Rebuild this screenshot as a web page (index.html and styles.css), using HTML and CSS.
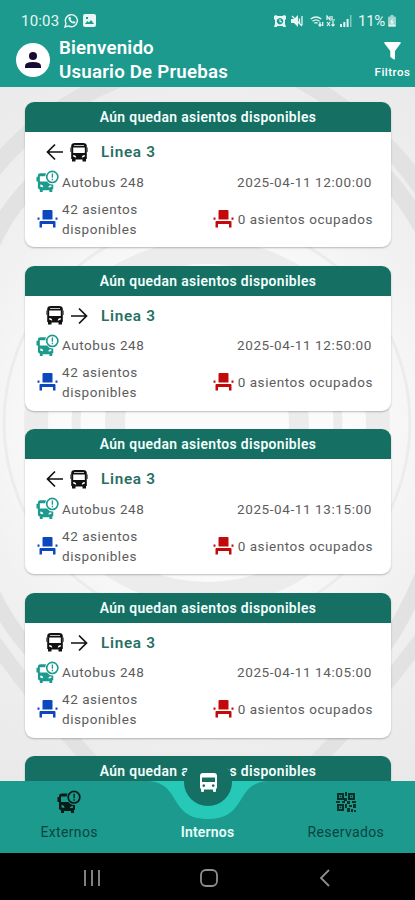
FILE: index.html
```html
<!DOCTYPE html>
<html lang="es">
<head>
<meta charset="utf-8">
<title>Autobuses</title>
<link rel="stylesheet" href="styles.css">
</head>
<body>
<svg class="defs" width="0" height="0">
  <symbol id="bus" viewBox="0 0 17 19"><path fill-rule="evenodd" d="M0 3q0-3 3-3h11q3 0 3 3v11q0 1.500-1 2v2q0 1-1 1h-1q-1 0-1-1v-1.500H4V18q0 1-1 1H2q-1 0-1-1v-2q-1-.5-1-2zM2 4.500V9h13V4.500zM3.800 11.200a1.400 1.400 0 1 0 .01 0zM13.200 11.200a1.400 1.400 0 1 0 .01 0z"/></symbol>
  <symbol id="linebus" viewBox="0 0 18 19"><path fill-rule="evenodd" d="M1.200 3Q1.200 0 5 0h8q3.800 0 3.800 3v13H16v2.500h-3.500V16.500h-7v2H2V16h-.8zM3.200 4.500V10h11.600V4.500zM4 2.800h10V2H4zM3.200 12v1.500l3 1.200q0-2.700-3-2.700zM14.800 12v1.500l-3 1.200q0-2.700 3-2.700z"/><path opacity=".7" d="M.1 4.500h.8V9H.1zM17.100 4.500h.8V9h-.8z"/></symbol>
  <symbol id="arrow" viewBox="0 0 18 18"><path fill="none" stroke="currentColor" stroke-width="1.700" d="M1 9h15M9 1.500L16.500 9 9 16.500"/></symbol>
  <symbol id="alertbus" viewBox="0 0 24 24"><path fill-rule="evenodd" d="M2 6q0-2.500 3-2.500h5.500q-.8 1.500-.8 3H4V12h7.500q2 3 5.500 3h1v5h-1v3h-3v-2H7v2H4v-2.500L2 19v-7H.5V7H2zM4.500 15v2.500l3 .5q0-3-3-3zM16 16q-3 0-3 2.300l3-.5z"/><circle cx="17" cy="7.200" r="5.800" fill="none" stroke="currentColor" stroke-width="1.700"/><path d="M16.400 3.700h1.400v4.500h-1.400zM16.400 9.200h1.400v1.500h-1.400z"/></symbol>
  <symbol id="seat" viewBox="0 0 20 18"><path d="M6 0h8q1 0 1 1v8.500H5V1q0-1 1-1zM0 7.500h2v2.200H0zM18 7.500h2v2.200h-2zM3 11h14q1 0 1 1v5.500h-2.500V14h-11v3.500H2V12q0-1 1-1z"/></symbol>
</svg>
<div class="app">
  <header class="top">
    <div class="status">
      <span class="time">10:03</span>
      <svg class="s-wa" viewBox="0 0 15 15"><path d="M1 14l1-3.700a6 6 0 1 1 2.500 2.600z" fill="none" stroke="currentColor" stroke-width="1.400"/><path d="M5 4l1.300-.3.900 2-.7.800q.8 1.500 2.300 2.200l.8-.8 2 1q-.4 2-2.500 1.600Q5.500 9.400 4.500 6q-.1-1.300.5-2z"/></svg>
      <svg class="s-img" viewBox="0 0 13 13"><path fill-rule="evenodd" d="M2 0h9q2 0 2 2v9q0 2-2 2H2q-2 0-2-2V2q0-2 2-2zM2 10h9L8 6 6 8.500 4.500 7zM3 3v2h2V3z"/></svg>
      <span class="grow"></span>
      <svg class="s-alarm" viewBox="0 0 12 12"><path fill-rule="evenodd" d="M0 1l2-1 1.500 1h5L10 0l2 1v3l-1 1v4l1 3H9.500L8.500 11h-5l-1 1H0l1-3V5L0 4zM6 3a3.200 3.200 0 1 0 .01 0z"/><path d="M5.500 4h1v2l1.500.5-.4 1L5.500 7z"/></svg>
      <svg class="s-mute" viewBox="0 0 12 12"><path d="M0 4h3l4-4v12L3 8H0z"/><path d="M1 1l10 10M8.500 3.500v5M11 1v9" fill="none" stroke="currentColor" stroke-width="1.300"/></svg>
      <svg class="s-wifi" viewBox="0 0 14 12"><path d="M.7 4Q6 0 11.300 4M2.500 6.200Q6 3.500 9.500 6.200M4.300 8.300Q6 7 7.700 8.300M10 7v4M8.500 9.500L10 11l1.500-1.500M12.700 11V7" fill="none" stroke="currentColor" stroke-width="1.300"/></svg>
      <svg class="s-lte" viewBox="0 0 10 12"><path d="M1 5V1l3 4V1M6 1v4h3M1 7l3 4M4 7l-3 4M7 6v5M5.500 9.500L7 11l1.500-1.500" fill="none" stroke="currentColor" stroke-width="1.200"/></svg>
      <svg class="s-signal" viewBox="0 0 12 12"><path d="M0 9h2v3H0zM3.300 7h2v5h-2zM6.600 4h2v8h-2z"/><path opacity=".5" d="M10 0h1.500v12H10z"/></svg>
      <span class="pct">11%</span>
      <svg class="s-bat" viewBox="0 0 8 12"><path opacity=".65" d="M2.500 0h3v1.500H7Q8 1.500 8 3v8q0 1-1 1H1q-1 0-1-1V3q0-1.500 1-1.500h1.500z"/><path d="M4.500 3L2 7.500h1.500L3 11l3-4.500H4.500zM1 9.500h6V11H1z"/></svg>
    </div>
    <div class="bar">
      <div class="avatar"><svg viewBox="0 0 16 16"><circle cx="8" cy="4" r="4"/><path d="M0 16v-2q0-4 8-4t8 4v2z"/></svg></div>
      <h1 class="hello">Bienvenido<br>Usuario De Pruebas</h1>
      <div class="filter">
        <svg viewBox="0 0 17 18"><path d="M1 0h15q1.300 0 .5 1.500L11 9v7.500Q11 18 9.500 17.300L7 15.500q-.7-.4-.7-1.500V9L.5 1.500Q-.3 0 1 0z"/></svg>
        <span>Filtros</span>
      </div>
    </div>
  </header>
  <main class="list">
    <svg class="backdrop" viewBox="0 0 415 694">
      <g fill="none" stroke="#e2e2e3">
        <path stroke-width="17" d="M-20 100Q35 22 130 -12M285 -15Q390 38 440 132M-20 190Q-5 130 45 85M440 175Q400 90 350 60"/>
        <path stroke-width="15" d="M-20 535Q38 620 120 705M437 530Q370 625 285 705M-20 475Q5 550 70 600M437 450Q400 555 350 600"/>
        <g stroke="#ececed">
          <circle cx="207" cy="336" r="203" stroke-width="3"/>
          <circle cx="207" cy="336" r="171" stroke-width="24"/>
          <circle cx="207" cy="336" r="131" stroke-width="9"/>
          <circle cx="207" cy="336" r="92" stroke-width="20"/>
          <path stroke-width="18" d="M128 188Q207 137 284 188"/>
          <path stroke-width="5" d="M140 560Q207 575 275 560"/>
        </g>
      </g>
    </svg>
    <article class="card">
      <h2>Aún quedan asientos disponibles</h2>
      <div class="line"><svg class="arrow back"><use href="#arrow"/></svg><svg class="lb"><use href="#linebus"/></svg><b>Linea 3</b></div>
      <div class="row"><svg class="ab"><use href="#alertbus"/></svg><span>Autobus 248</span><time>2025-04-11 12:00:00</time></div>
      <div class="row seats"><svg class="seat free"><use href="#seat"/></svg><span>42 asientos<br>disponibles</span><svg class="seat taken"><use href="#seat"/></svg><span class="occ">0 asientos ocupados</span></div>
    </article>
    <article class="card">
      <h2>Aún quedan asientos disponibles</h2>
      <div class="line"><svg class="lb"><use href="#linebus"/></svg><svg class="arrow"><use href="#arrow"/></svg><b>Linea 3</b></div>
      <div class="row"><svg class="ab"><use href="#alertbus"/></svg><span>Autobus 248</span><time>2025-04-11 12:50:00</time></div>
      <div class="row seats"><svg class="seat free"><use href="#seat"/></svg><span>42 asientos<br>disponibles</span><svg class="seat taken"><use href="#seat"/></svg><span class="occ">0 asientos ocupados</span></div>
    </article>
    <article class="card">
      <h2>Aún quedan asientos disponibles</h2>
      <div class="line"><svg class="arrow back"><use href="#arrow"/></svg><svg class="lb"><use href="#linebus"/></svg><b>Linea 3</b></div>
      <div class="row"><svg class="ab"><use href="#alertbus"/></svg><span>Autobus 248</span><time>2025-04-11 13:15:00</time></div>
      <div class="row seats"><svg class="seat free"><use href="#seat"/></svg><span>42 asientos<br>disponibles</span><svg class="seat taken"><use href="#seat"/></svg><span class="occ">0 asientos ocupados</span></div>
    </article>
    <article class="card">
      <h2>Aún quedan asientos disponibles</h2>
      <div class="line"><svg class="lb"><use href="#linebus"/></svg><svg class="arrow"><use href="#arrow"/></svg><b>Linea 3</b></div>
      <div class="row"><svg class="ab"><use href="#alertbus"/></svg><span>Autobus 248</span><time>2025-04-11 14:05:00</time></div>
      <div class="row seats"><svg class="seat free"><use href="#seat"/></svg><span>42 asientos<br>disponibles</span><svg class="seat taken"><use href="#seat"/></svg><span class="occ">0 asientos ocupados</span></div>
    </article>
    <article class="card">
      <h2>Aún quedan asientos disponibles</h2>
    </article>
  </main>
  <nav class="tabs">
    <svg class="notch" viewBox="0 0 120 40"><path d="M0 0C34 2 20 38 60 38S86 2 120 0z"/></svg>
    <div class="fab"><svg><use href="#bus"/></svg></div>
    <div class="tab"><svg class="ti"><use href="#alertbus"/></svg><span>Externos</span></div>
    <div class="tab active"><span>Internos</span></div>
    <div class="tab"><svg class="qr" viewBox="0 0 20 20"><path fill="none" stroke="currentColor" stroke-width="2" d="M2 2h5v5H2zM13 2h5v5h-5zM2 13h5v5H2z"/><path d="M3.700 3.700h1.600v1.600H3.700zM14.700 3.700h1.600v1.600h-1.600zM3.700 14.700h1.600v1.600H3.700zM9 0h2v4H9zM8 6h3v3H8zM0 9h4v2H0zM6 9h3v2H6zM11 9h3v3h-3zM16 9h4v2h-4zM9 12h2v4H9zM13 13h3v2h-3zM17 12h3v4h-3zM11 16h3v4h-3zM15 17h2v3h-2zM18 18h2v2h-2z"/></svg><span>Reservados</span></div>
  </nav>
  <footer class="sys">
    <svg viewBox="0 0 18 18"><path d="M2 1v16M9 1v16M16 1v16"/></svg>
    <svg viewBox="0 0 18 18"><rect x="1" y="1" width="16" height="16" rx="5"/></svg>
    <svg viewBox="0 0 18 18"><path d="M13 1L5 9l8 8"/></svg>
  </footer>
</div>
</body>
</html>
```
FILE: styles.css
```css
* { box-sizing: border-box; }
body { margin: 0; font-family: Roboto, sans-serif; }
svg { display: block; flex: none; fill: currentColor; }
.defs { position: absolute; }
.app { width: 415px; height: 900px; display: flex; flex-direction: column; overflow: hidden; }

.top { flex: none; height: 87px; background: #1c9a8e; color: #fff; }
.status { height: 36px; padding: 5px 19px 0 21px; display: flex; align-items: center; color: #e6f7f4; }
.time { width: 43px; font-size: 15px; letter-spacing: .2px; }
.s-wa { width: 15px; height: 15px; margin-right: 4px; }
.s-img { width: 13px; height: 13px; }
.grow { flex: 1; }
.s-alarm { width: 12px; height: 12px; margin-right: 5px; }
.s-mute { width: 12px; height: 12px; margin-right: 7px; }
.s-wifi { width: 14px; height: 12px; margin-right: 2px; }
.s-lte { width: 10px; height: 12px; margin-right: 4px; }
.s-signal { width: 12px; height: 12px; margin-right: 6px; }
.pct { width: 30px; font-size: 15px; letter-spacing: -.3px; }
.s-bat { width: 8px; height: 12px; }
.bar { display: flex; align-items: center; height: 48px; padding-left: 16px; }
.avatar { width: 34px; height: 34px; margin-right: 9px; border-radius: 50%; background: #fff; color: #160b35; display: flex; align-items: center; justify-content: center; }
.avatar svg { width: 16px; height: 16px; }
.hello { flex: 1; margin: 0; font-size: 18.700px; line-height: 24px; font-weight: 600; letter-spacing: .2px; }
.filter { width: 45px; display: flex; flex-direction: column; align-items: center; font-size: 11.500px; font-weight: 500; line-height: 14px; letter-spacing: .5px; }
.filter svg { width: 17px; height: 18px; margin-bottom: 5px; }

.list { position: relative; flex: none; height: 694px; padding: 15px 24px 0 25px; overflow: hidden; background: radial-gradient(circle at 50% 48%, #fbfbfb 35%, #f1f1f1 60%, #e9e9ea 100%); }
.backdrop { position: absolute; inset: 0; width: 415px; height: 694px; }
.card { position: relative; height: 145px; margin-bottom: 18.500px; border-radius: 9px; overflow: hidden; background: #fff; box-shadow: 0 1px 2px rgba(0, 0, 0, .25); color: #5c5c5c; font-size: 13.500px; letter-spacing: .55px; }
.card h2 { margin: 0; height: 30px; line-height: 31px; background: #156f63; color: #f2fffc; text-align: center; font-size: 13.900px; font-weight: 600; letter-spacing: .35px; }
.line { height: 40px; padding-left: 21px; display: flex; align-items: center; gap: 6px; color: #111; }
.line b { margin-left: 7px; color: #286f63; font-size: 15.300px; font-weight: 600; letter-spacing: .7px; }
.lb { width: 18px; height: 19px; }
.arrow { width: 18px; height: 18px; }
.back { transform: scaleX(-1); }
.row { height: 19px; padding: 0 19px 0 11px; display: flex; align-items: center; }
.ab { width: 23px; height: 23px; margin-right: 3px; color: #1c9a8e; }
.row time { margin-left: auto; letter-spacing: .6px; }
.seats { height: 55px; padding: 0 18px 0 12px; line-height: 20px; }
.seat { width: 21px; height: 18px; }
.free { color: #0d47bd; margin-right: 4px; }
.taken { color: #c20a0a; margin-left: auto; margin-right: 4px; }
.occ { letter-spacing: .55px; }

.tabs { position: relative; flex: none; height: 72px; display: flex; background: #1c9a8e; color: #0a443e; font-size: 14px; letter-spacing: .35px; }
.tab { flex: 1; display: flex; flex-direction: column; align-items: center; justify-content: flex-end; line-height: 18px; padding-bottom: 12px; }
.active { color: #e8fffb; font-weight: 600; letter-spacing: .2px; }
.ti { width: 24px; height: 24px; margin-bottom: 9px; color: #041b18; }
.qr { width: 20px; height: 20px; margin-bottom: 11px; color: #07302b; }
.notch { position: absolute; left: 148px; top: 0; width: 120px; height: 40px; color: #26c8b7; }
.fab { position: absolute; left: 184px; top: -23px; width: 48px; height: 48px; border-radius: 50%; background: #156f63; color: #fff; display: flex; align-items: center; justify-content: center; }
.fab svg { width: 17px; height: 19px; }

.sys { flex: 1; background: #000; display: flex; align-items: center; justify-content: space-between; padding: 2px 81px 0 83px; }
.sys svg { width: 18px; height: 18px; fill: none; stroke: #8e8e8e; stroke-width: 1.800; }
```
